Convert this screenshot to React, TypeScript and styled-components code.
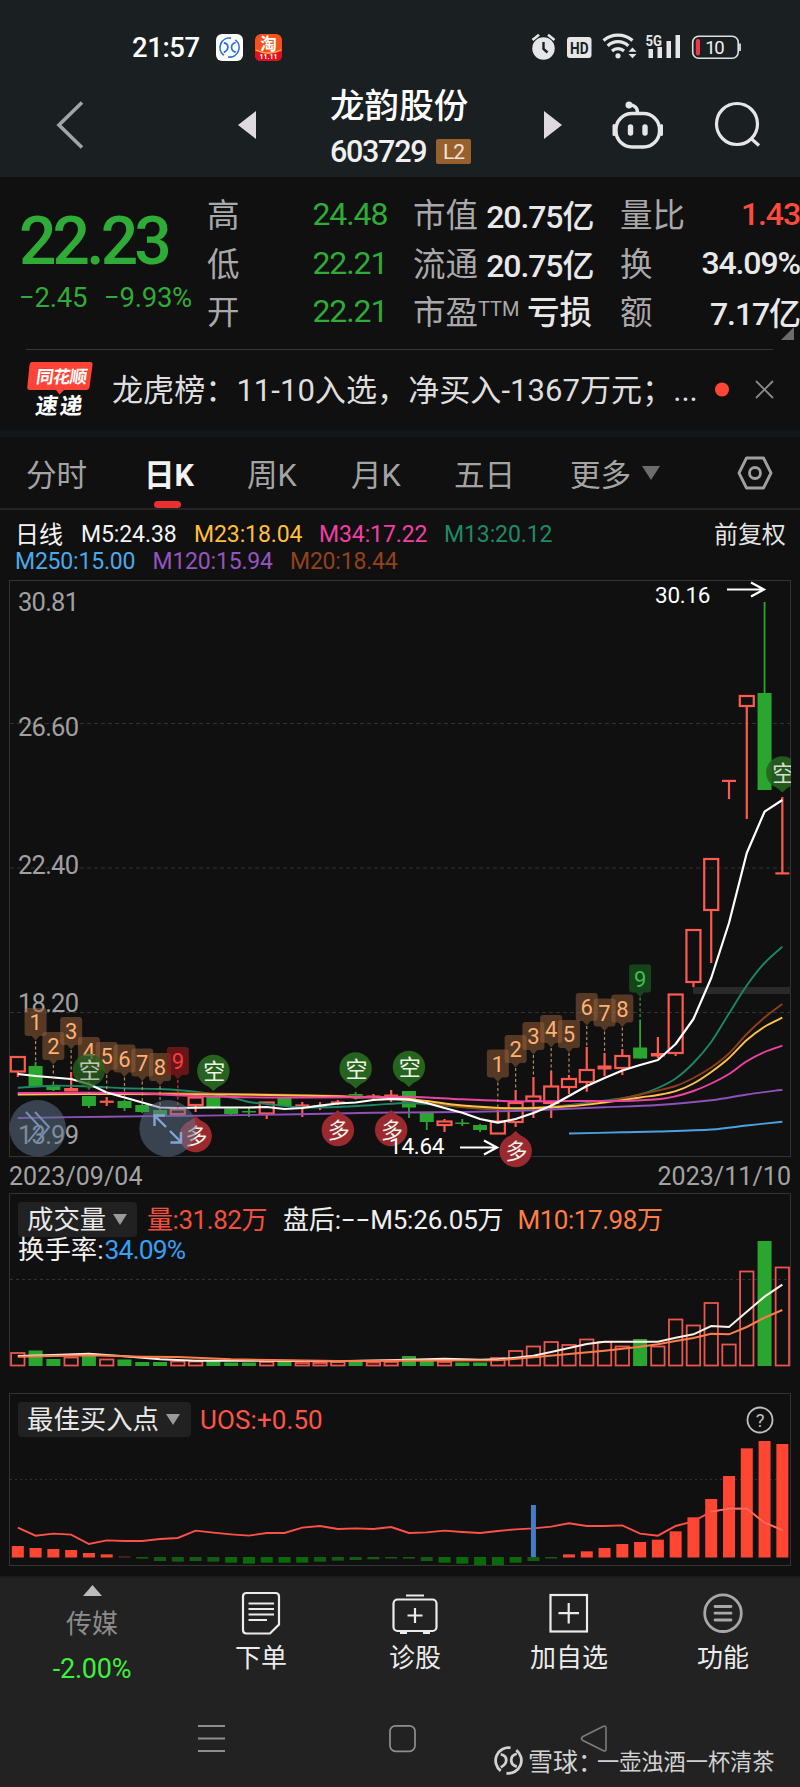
import React from 'react';
import styled, { createGlobalStyle } from 'styled-components';

const GlobalStyle = createGlobalStyle`
  body { margin: 0; background: #101010; }
  * { box-sizing: border-box; }
  svg { display: block; overflow: visible; flex-shrink: 0; }
`;

const fontStack = `Roboto, 'Noto Sans CJK SC', sans-serif`;

const C = {
  green: '#2fab38',
  candleRed: '#ff5a50',
  candleGreen: '#2aa52f',
  grid: '#333333',
  label: '#a0a0a2',
};

const Screen = styled.div`
  width: 800px;
  height: 1787px;
  overflow: hidden;
  position: relative;
  background: #101010;
  color: #e6e6e6;
  font-family: ${fontStack};
  display: flex;
  flex-direction: column;
  white-space: nowrap;
`;

const StatusBar = styled.header`
  height: 94px;
  background: #1a2022;
  display: flex;
  align-items: center;
  padding: 0 60px 0 132px;
`;
const Clock = styled.span`
  font-size: 27.5px;
  font-weight: 500;
  color: #fff;
  width: 84px;
  letter-spacing: -0.4px;
`;
const AppIcons = styled.div`
  display: flex;
  gap: 12px;
  flex: 1;
`;

const TitleBar = styled.div`
  height: 83px;
  background: #1a2022;
  display: grid;
  grid-template-columns: 238px 92px 141px 91px 104px 134px;
  grid-template-rows: 61px;
  align-items: center;
`;
const BackSlot = styled.div`
  padding-left: 56px;
`;
const StockTitle = styled.div`
  display: flex;
  flex-direction: column;
  padding-top: 5px;
`;
const StockName = styled.div`
  font-size: 34.6px;
  line-height: 46px;
  font-weight: 500;
  color: #fff;
`;
const StockCode = styled.div`
  display: flex;
  align-items: center;
  justify-content: space-between;
  height: 40px;
  margin-top: 2px;
  font-size: 30.5px;
  font-weight: 500;
  letter-spacing: -1.3px;
  color: #f0f0f0;
`;
const LevelBadge = styled.span`
  width: 35px;
  height: 25px;
  border-radius: 2px;
  background: #96612f;
  color: #f3e3d3;
  font-size: 21px;
  font-weight: 400;
  letter-spacing: -1px;
  line-height: 26px;
  text-align: center;
`;

const Quote = styled.section`
  height: 172px;
  position: relative;
  display: grid;
  grid-template-columns: 207px 179px 27px 179px 28px 180px;
`;
const LastPrice = styled.div`
  padding: 27px 0 0 19px;
  color: ${C.green};
`;
const BigPrice = styled.div`
  font-size: 66px;
  line-height: 76px;
  font-weight: 500;
  letter-spacing: -3.9px;
`;
const ChangeRow = styled.div`
  display: grid;
  grid-template-columns: 85px 100px;
  font-size: 27.5px;
  line-height: 32px;
  margin-top: 2px;
  letter-spacing: -0.25px;
`;
const StatColumn = styled.div<{ $col: number }>`
  grid-column: ${(p) => p.$col};
  padding-top: 13px;
`;
const Stat = styled.div`
  height: 48.5px;
  display: flex;
  align-items: center;
  justify-content: space-between;
  font-size: 32.5px;
`;
const StatName = styled.span`
  color: #a9a9ab;
  padding-bottom: 3px;
  sup { font-size: 20px; line-height: 0; vertical-align: 8px; }
`;
const StatValue = styled.span<{ $color?: string; $edge?: boolean }>`
  color: ${(p) => p.$color || '#e8e8e8'};
  font-size: 32px;
  font-weight: ${(p) => (p.$color === C.green ? 400 : 500)};
  letter-spacing: -1.1px;
  margin-right: ${(p) => (p.$edge ? 0 : -1.3)}px;
`;
const StatWord = styled.span`
  color: #e8e8e8;
  font-weight: 500;
  padding-bottom: 4px;
`;
const CornerMark = styled.svg`
  position: absolute;
  right: 6px;
  top: 150px;
`;

const News = styled.section`
  height: 81px;
  margin: 0 27px 0 26px;
  border-top: 1px solid #363636;
  display: flex;
  align-items: center;
`;
const NewsLogo = styled.div`
  width: 86px;
  flex-shrink: 0;
`;
const NewsText = styled.div`
  width: 603px;
  flex-shrink: 0;
  font-size: 31.1px;
  line-height: 40px;
  padding-top: 1px;
  color: #dedede;
`;
const Band = styled.div`
  height: 7px;
  background: #111718;
`;

const Tabs = styled.nav`
  height: 73px;
  border-bottom: 2px solid #242424;
  display: grid;
  grid-template-columns: 118px 103px 104px 103px 116px 167px 40px;
  padding-left: 26px;
`;
const Tab = styled.div<{ $active?: boolean }>`
  position: relative;
  display: flex;
  align-items: center;
  gap: 11px;
  font-size: 30.6px;
  color: ${(p) => (p.$active ? '#f2f2f2' : '#a4a4a4')};
  font-weight: ${(p) => (p.$active ? 700 : 400)};
  letter-spacing: -0.2px;
`;
const Underline = styled.i`
  position: absolute;
  left: 10px;
  bottom: 0;
  width: 27px;
  height: 7px;
  border-radius: 3.5px;
  background: #e93030;
`;

const Legend = styled.div`
  height: 70px;
  padding-top: 5px;
`;
const LegendRow = styled.div<{ $cols: string; $ls?: number }>`
  display: grid;
  grid-template-columns: ${(p) => p.$cols};
  padding-left: 15px;
  height: 31px;
  align-items: center;
  letter-spacing: ${(p) => p.$ls ?? 0}px;
`;
const LegendItem = styled.span<{ $color: string }>`
  color: ${(p) => p.$color};
  font-size: 23px;
`;
const LegendWord = styled(LegendItem)`
  font-size: 24px;
  padding-bottom: 4px;
`;

const Dates = styled.div`
  height: 33px;
  display: flex;
  justify-content: space-between;
  align-items: center;
  padding: 0 9px;
  font-size: 25px;
  letter-spacing: 0.05px;
  color: #a3a3a5;
`;

const Panel = styled.section`
  height: 173px;
  margin-bottom: 27px;
  display: grid;
  & > * { grid-area: 1 / 1; }
`;
const PanelHead = styled.div`
  z-index: 1;
  padding: 9px 26px 0 18px;
`;
const PanelRow = styled.div`
  display: flex;
  align-items: center;
  height: 35px;
  font-size: 26px;
  line-height: 32px;
`;
const IndicatorSelect = styled.div<{ $w: number }>`
  width: ${(p) => p.$w}px;
  height: 35px;
  background: #212121;
  border-radius: 4px;
  display: flex;
  align-items: center;
  gap: 7px;
  padding-left: 9px;
  font-size: 26.4px;
  color: #e8e8e8;
`;
const Reading = styled.span<{ $color: string; $ml: number; $ls?: number }>`
  color: ${(p) => p.$color};
  margin-left: ${(p) => p.$ml}px;
  letter-spacing: ${(p) => p.$ls ?? 0}px;
`;
const TurnoverRow = styled.div`
  height: 30px;
  line-height: 26px;
  font-size: 26.4px;
  color: #f0f0f0;
`;
const Push = styled.div`
  margin-left: auto;
`;

const Dock = styled.footer`
  flex: 1;
  margin-top: -17px;
  background: #222;
  border-top: 2px solid #1c1c1c;
`;
const DockItems = styled.div`
  display: grid;
  grid-template-columns: 184px 154px 154px 154px 154px;
  height: 125px;
`;
const DockItem = styled.div`
  display: flex;
  flex-direction: column;
  align-items: center;
  padding-top: 12px;
  font-size: 26px;
  line-height: 34px;
  color: #ececec;
  svg { margin-bottom: 5px; }
`;
const Sector = styled.div`
  display: flex;
  flex-direction: column;
  align-items: center;
  padding-top: 7px;
  font-size: 26px;
  line-height: 38px;
  color: #8c8c8c;
  svg { margin-bottom: 9px; }
`;
const SectorChange = styled.div`
  margin-top: 10px;
  font-size: 27px;
  line-height: 32px;
  letter-spacing: -0.2px;
  color: #3df23d;
`;
const SystemNav = styled.div`
  display: grid;
  grid-template-columns: 191px 190px 29px;
  padding: 20px 0 0 197px;
`;
const Watermark = styled.div`
  position: absolute;
  left: 494px;
  top: 1743px;
  height: 34px;
  display: flex;
  align-items: center;
  font-size: 22.2px;
  color: #d2d2d2;
`;
const WatermarkBrand = styled.span`
  font-size: 25px;
  width: 69px;
  margin-left: 5px;
`;

const STEP = 17.78;
const X0 = 17.8;
const cx = (i: number) => X0 + i * STEP;

type Candle = [number, 'r' | 'g', number, number, number, number];
// index, direction, high, body top, body bottom, low (chart y)
const candles: Candle[] = [
  [0, 'r', 1056, 1057, 1071.5, 1077], [1, 'g', 1062, 1066, 1087, 1087], [2, 'g', 1084, 1086, 1090, 1091],
  [3, 'r', 1072, 1088.5, 1091, 1091], [4, 'g', 1096, 1096, 1106, 1108], [5, 'r', 1097, 1101.5, 1102, 1106],
  [6, 'g', 1100, 1101, 1108, 1111], [7, 'g', 1105, 1105, 1112, 1113], [8, 'g', 1110, 1110, 1115.5, 1117],
  [9, 'r', 1109, 1109.5, 1114, 1114], [10, 'r', 1095, 1097.5, 1105, 1112], [11, 'g', 1097, 1097, 1107, 1109],
  [12, 'g', 1108, 1108.5, 1114, 1116], [13, 'g', 1108, 1111, 1112, 1117], [14, 'r', 1102, 1102.5, 1113.5, 1119],
  [15, 'g', 1098, 1098, 1106, 1107], [16, 'r', 1102, 1105, 1106, 1117], [17, 'r', 1102, 1106, 1107, 1110],
  [18, 'r', 1100, 1102, 1103, 1105], [19, 'g', 1092, 1094, 1098, 1099.5], [20, 'r', 1094, 1096, 1097, 1099],
  [21, 'r', 1090, 1095, 1098, 1102], [22, 'g', 1091, 1091, 1107.5, 1118], [23, 'g', 1113, 1113, 1122, 1130],
  [24, 'r', 1119, 1121.5, 1125, 1132], [25, 'g', 1119, 1122.5, 1123.5, 1126], [26, 'g', 1124, 1125, 1130, 1132],
  [27, 'r', 1108, 1121.5, 1133.5, 1134], [28, 'r', 1090, 1103, 1122, 1127], [29, 'r', 1077, 1096.5, 1101, 1118],
  [30, 'r', 1071, 1086.5, 1103, 1118], [31, 'r', 1075, 1079, 1087, 1094], [32, 'r', 1047, 1070, 1082, 1091.7],
  [33, 'r', 1053, 1066, 1069, 1076], [34, 'r', 1049, 1056, 1068, 1075], [35, 'g', 1020, 1047.5, 1058.5, 1058.5],
  [36, 'r', 1037, 1053.5, 1056, 1058], [37, 'r', 994, 994.5, 1053, 1056], [38, 'r', 929, 930, 982, 987],
  [39, 'r', 858, 859, 910, 963], [40, 'r', 780, 780.5, 781.3, 799], [41, 'r', 695, 696, 706, 819],
  [42, 'g', 602, 693, 790, 790], [43, 'r', 797, 873, 873.8, 874],
];

type Pt = [number, number];
const pts = (list: Pt[]) => list.map(([i, y]) => [cx(i), y] as Pt);
const poly = (list: Pt[]) => pts(list).map((p) => p.join(',')).join(' ');
const smooth = (list: Pt[]) => {
  const p = pts(list);
  let d = `M${p[0][0]},${p[0][1]}`;
  for (let i = 0; i < p.length - 1; i++) {
    const a = p[Math.max(i - 1, 0)], b = p[i], c = p[i + 1], e = p[Math.min(i + 2, p.length - 1)];
    d += `C${b[0] + (c[0] - a[0]) / 6},${b[1] + (c[1] - a[1]) / 6} ${c[0] - (e[0] - b[0]) / 6},${c[1] - (e[1] - b[1]) / 6} ${c[0]},${c[1]}`;
  }
  return d;
};

const m5: Pt[] = [1074, 1076, 1077.5, 1079, 1084, 1092.5, 1097.5, 1102.5, 1107.5, 1108, 1107.7, 1107.5, 1107.5, 1107.5, 1107, 1109, 1108, 1105.7, 1103.5, 1102.5, 1100, 1099, 1099.7, 1103, 1108, 1112.7, 1119, 1122.7, 1119, 1113, 1105.7, 1096, 1086, 1078, 1070.5, 1065, 1060, 1044, 1019, 978, 923, 853, 811.7, 800].map((y, i) => [i, y]);
const averages: { color: string; line: Pt[] }[] = [
  { color: '#1e8566', line: [[0, 1087.7], [2, 1085.7], [4, 1086.5], [6, 1088.3], [8, 1089], [10, 1091.7], [12, 1097.5], [13, 1102], [14, 1104], [16, 1107.3], [18, 1107], [20, 1105], [22, 1103], [24, 1105.5], [26, 1108.5], [28, 1109.5], [30, 1107], [32, 1103], [34, 1098.3], [35, 1094.5], [36, 1088], [37, 1078.5], [38, 1063], [39, 1042], [40, 1013.5], [41, 985.5], [42, 963], [43, 946.7]] },
  { color: '#8f3f17', line: [[0, 1093.5], [8, 1093], [14, 1094.5], [19, 1096.5], [21, 1099], [23, 1103], [25, 1107], [27, 1109], [29, 1107.5], [31, 1105.7], [33, 1101.7], [35, 1094.5], [36, 1090.5], [37, 1086], [38, 1078], [39, 1067.5], [40, 1053.5], [41, 1034], [42, 1017.5], [43, 1004]] },
  { color: '#ffc24a', line: [[0, 1094.5], [6, 1094], [12, 1094.5], [18, 1096.2], [19, 1097.5], [21, 1097.5], [23, 1101], [25, 1105.5], [28, 1108.3], [31, 1106.3], [33, 1102.5], [35, 1097.5], [36, 1095], [37, 1091.2], [38, 1083.5], [39, 1072], [40, 1058], [41, 1040], [42, 1026.7], [43, 1017.7]] },
  { color: '#ef43a4', line: [[0, 1093], [6, 1093], [10, 1096], [14, 1097.5], [19, 1097.3], [22, 1096.7], [25, 1099.3], [28, 1101.3], [31, 1101], [34, 1101], [36, 1099.3], [37, 1096.3], [38, 1091], [39, 1083.5], [40, 1074], [41, 1061.3], [42, 1052], [43, 1045.7]] },
  { color: '#8e51b8', line: [[0, 1118], [5, 1116.7], [10, 1115.7], [15, 1114.5], [20, 1112.8], [25, 1112], [28, 1111], [30, 1109.5], [33, 1107.3], [36, 1105], [39, 1100.3], [41, 1094.5], [43, 1089.7]] },
  { color: '#4aa3e0', line: [[31, 1133.5], [34, 1132.3], [36, 1131.5], [39, 1129.5], [41, 1125.5], [43, 1121.7]] },
];

const countTags: [number, string, number, string?][] = [
  [1, '1', 1023], [2, '2', 1047], [3, '3', 1032], [4, '4', 1052], [5, '5', 1057], [6, '6', 1059.5], [7, '7', 1063.5], [8, '8', 1068], [9, '9', 1062, 'red'],
  [27, '1', 1064.5], [28, '2', 1050], [29, '3', 1037], [30, '4', 1030], [31, '5', 1035], [32, '6', 1008], [33, '7', 1013.5], [34, '8', 1009.5], [35, '9', 979.5, 'green'],
];
const tagColors: Record<string, [string, string]> = {
  brown: ['rgba(150,96,55,0.52)', '#ffb074'],
  red: ['rgba(140,25,25,0.7)', '#ff3b3b'],
  green: ['rgba(22,78,28,0.85)', '#3fc04a'],
};

const CountTag = ({ x, y, text, kind = 'brown', to }: { x: number; y: number; text: string; kind?: string; to: number }) => (
  <g>
    <line x1={x} x2={x} y1={y + 18} y2={to} stroke={kind === 'brown' ? '#d9a06a' : tagColors[kind][1]} strokeOpacity="0.85" strokeWidth="1.2" strokeDasharray="3 2.5" />
    <path d={`M${x - 8},${y - 15}h16q3,0 3,3v22q0,3 -3,3h-4l-4,4.5l-4,-4.5h-4q-3,0 -3,-3v-22q0,-3 3,-3z`} fill={tagColors[kind][0]} />
    <text x={x} y={y + 7} fontSize="22" textAnchor="middle" fill={tagColors[kind][1]}>{text}</text>
  </g>
);

const Pin = ({ i, y, side, opacity = 1 }: { i: number; y: number; side: 'short' | 'long'; opacity?: number }) => {
  const s = side === 'short' ? 1 : -1;
  const x = cx(i);
  return (
    <g opacity={opacity}>
      <path d={`M${x - 9},${y + 12 * s}L${x},${y + 20 * s}L${x + 9},${y + 12 * s}z`} fill={s === 1 ? '#26631e' : '#9b2a30'} />
      <circle cx={x} cy={y} r="16.2" fill={s === 1 ? '#26631e' : '#9b2a30'} />
      <text x={x + 0.8} y={y + 8} fontSize="22" textAnchor="middle" fill="#eef4e8">{s === 1 ? '空' : '多'}</text>
    </g>
  );
};

const PriceChart = () => (
  <svg width="800" height="580" viewBox="0 580 800 580" fontFamily={fontStack}>
    <defs>
      <clipPath id="plot"><rect x="9" y="580" width="782" height="600" /></clipPath>
    </defs>
    <rect x="9.5" y="580.5" width="781" height="576" fill="none" stroke={C.grid} />
    {[723.5, 868, 1012.5].map((y) => (
      <line key={y} x1="10" x2="790" y1={y} y2={y} stroke={C.grid} strokeDasharray="4 3" />
    ))}
    <rect x="693" y="987" width="98" height="7" fill="#2a2a2a" />
    <g fill={C.label} fontSize="25.5">
      {([['30.81', 611], ['26.60', 736], ['22.40', 874], ['18.20', 1012], ['13.99', 1144]] as [string, number][]).map(([t, y]) => (
        <text key={t} x="18" y={y} textLength="61">{t}</text>
      ))}
    </g>
    {candles.map(([i, dir, hi, top, bot, lo]) => {
      const x = cx(i);
      const thin = bot - top < 3.5;
      return dir === 'g' ? (
        <g key={i} fill={C.candleGreen}>
          <rect x={x - 0.9} y={hi} width="1.8" height={lo - hi} />
          <rect x={x - 7} y={top} width="14" height={Math.max(bot - top, 1.5)} />
        </g>
      ) : (
        <g key={i} stroke={C.candleRed} strokeWidth="2.2" fill="none">
          {top > hi + 1 && <line x1={x} x2={x} y1={hi} y2={top} />}
          {lo > bot + 1 && <line x1={x} x2={x} y1={bot} y2={lo} />}
          {thin ? <line x1={x - 7} x2={x + 7} y1={(top + bot) / 2} y2={(top + bot) / 2} strokeWidth={Math.max(bot - top + 1, 2.2)} />
            : <rect x={x - 7} y={top} width="14" height={bot - top} />}
        </g>
      );
    })}
    {averages.map(({ color, line }) => (
      <path key={color} d={smooth(line)} stroke={color} strokeWidth="1.9" fill="none" />
    ))}
    <polyline points={poly(m5)} stroke="#fff" strokeWidth="2.2" fill="none" strokeLinejoin="round" />
    {countTags.map(([i, t, y, kind]) => (
      <CountTag key={i} x={cx(i)} y={y} text={t} kind={kind} to={Math.max(candles[i][2], y + 18)} />
    ))}
    <g clipPath="url(#plot)">
      <Pin i={4} y={1070} side="short" opacity={0.75} />
      <Pin i={11} y={1071} side="short" />
      <Pin i={19} y={1068.5} side="short" />
      <Pin i={22} y={1067} side="short" />
      <Pin i={43} y={772.5} side="short" opacity={0.9} />
      <Pin i={10} y={1136} side="long" />
      <Pin i={18} y={1130} side="long" />
      <Pin i={21} y={1130} side="long" />
      <Pin i={28} y={1151} side="long" />
    </g>
    <circle cx="37.7" cy="1128.3" r="28.3" fill="rgba(96,118,142,0.5)" />
    <path d="M26,1112L40,1127L28,1142M35,1112L49,1127L37,1142" stroke="#7490b4" strokeWidth="2" fill="none" />
    <circle cx="167.7" cy="1128.3" r="28.3" fill="rgba(96,118,142,0.5)" />
    <path d="M166,1127L155,1116M154.500,1126V1115.500H165M170,1131L181,1142M170.500,1142.500H181V1132" stroke="#83a5d6" strokeWidth="2.4" fill="none" />
    <g stroke="#fff" strokeWidth="2.2" fill="none">
      <path d="M727,589.5H764M751,582.5L764,589.5L751,596.5" />
      <path d="M460,1147.500H497M484,1140.500L497,1147.500L484,1154.500" />
    </g>
    <g fill="#fff" fontSize="22.5">
      <text x="655" y="602.500" textLength="55.500">30.16</text>
      <text x="389" y="1154" textLength="55.500">14.64</text>
    </g>
  </svg>
);

// [top edge, direction] per trading day, bars stand on y = 1366
const volumes: [number, 'r' | 'g'][] = [
  [1353, 'r'], [1350.5, 'g'], [1359, 'g'], [1357.5, 'r'], [1354.5, 'g'], [1359.5, 'r'], [1359.5, 'g'], [1362, 'g'], [1362, 'g'], [1361.5, 'r'], [1361.5, 'r'],
  [1360, 'g'], [1362.5, 'g'], [1362.5, 'g'], [1362, 'r'], [1361, 'g'], [1363, 'r'], [1363, 'r'], [1362, 'r'], [1361, 'g'], [1362.5, 'r'], [1362, 'r'],
  [1356, 'g'], [1360.5, 'g'], [1362, 'r'], [1362.5, 'g'], [1362.5, 'g'], [1358, 'r'], [1351, 'r'], [1346.5, 'r'], [1342, 'r'], [1345, 'r'], [1339.5, 'r'],
  [1342, 'r'], [1346.5, 'r'], [1339, 'g'], [1346.5, 'r'], [1319.5, 'r'], [1325.5, 'r'], [1303, 'r'], [1344.5, 'r'], [1271.5, 'r'], [1241, 'g'], [1267.5, 'r'],
];
const vy = (v: number) => 1190 + v / 3;
const volM5: Pt[] = ([[0, 498], [2, 495], [4, 491], [6, 499], [8, 508], [10, 512], [14, 512], [18, 514], [22, 509], [24, 506], [26, 509], [27, 508], [28, 503], [29, 497], [30, 486], [31, 474], [32, 462], [33, 455], [36, 455], [37, 443], [38, 433], [39, 408], [40, 411], [41, 365], [42, 320], [43, 284]] as Pt[]).map(([i, v]) => [i, vy(v)]);
const volM10: Pt[] = ([[0, 500], [4, 496], [7, 500], [9, 501], [12, 508], [18, 513], [27, 511], [29, 502], [31, 492], [33, 482], [35, 470], [36, 463], [37, 453], [38, 444], [39, 431], [40, 433], [41, 411], [42, 383], [43, 360]] as Pt[]).map(([i, v]) => [i, vy(v)]);

const VolumeChart = () => (
  <svg width="800" height="173" viewBox="0 1193 800 173">
    <path d="M9.5,1366V1193.500H790.500V1366" stroke={C.grid} fill="none" />
    <line x1="10" x2="790" y1="1279.5" y2="1279.5" stroke={C.grid} strokeDasharray="3 3" />
    {volumes.map(([top, dir], i) =>
      dir === 'g' ? <rect key={i} x={cx(i) - 7} y={top} width="14" height={1366 - top} fill={C.candleGreen} />
        : <rect key={i} x={cx(i) - 6.7} y={top} width="13.4" height={1365.5 - top} fill="none" stroke="#e8564e" strokeWidth="1.8" />)}
    <polyline points={poly(volM5)} stroke="#fff0e6" strokeWidth="2" fill="none" />
    <polyline points={poly(volM10)} stroke="#ff7d4a" strokeWidth="2" fill="none" />
  </svg>
);

const uosBars = [498, 504, 507, 510, 519, 523, 529, 536, 543, 545, 543, 545, 548, 551, 548, 548, 548, 545, 542, 540, 538, 534, 536, 543, 548, 551, 555, 555, 548, 543, 534, 523, 514, 504, 492, 486, 479, 454, 412, 357, 288, 205, 183, 192];
const uosLine = [443, 467, 461, 464, 492, 481, 483, 483, 477, 474, 452, 458, 463, 467, 459, 459, 443, 438, 447, 445, 447, 441, 459, 457, 452, 456, 459, 453, 448, 445, 440, 430, 438, 438, 436, 461, 467, 438, 424, 395, 386, 386, 428, 450];
const uy = (v: number) => 1380 + v / 3;

const UosChart = () => (
  <svg width="800" height="173" viewBox="0 1393 800 173">
    <rect x="9.5" y="1393.500" width="781" height="172" fill="none" stroke={C.grid} />
    <line x1="10" x2="790" y1="1479.500" y2="1479.500" stroke={C.grid} strokeDasharray="2 3" />
    <polyline points={poly(uosLine.map((v, i) => [i, uy(v)] as Pt))} stroke="#ff5148" strokeWidth="1.9" fill="none" />
    {uosBars.map((v, i) => {
      const y = uy(v);
      return v < 531
        ? <rect key={i} x={cx(i) - 6} y={y} width="12" height={1557.5 - y} fill={i === 6 ? '#6b2b2b' : '#ff4633'} />
        : <rect key={i} x={cx(i) - 6} y={1557} width="12" height={Math.max(y - 1557, 1.5)} fill={v > 546 ? '#0a6a0a' : '#125c14'} />;
    })}
    <rect x={cx(29) - 2.5} y="1505" width="5" height="52" fill="#467cc4" />
    <polyline points={poly([39, 40, 41, 42, 43].map((i) => [i, uy(uosLine[i])] as Pt))} stroke="#ff6d60" strokeWidth="1.6" fill="none" />
  </svg>
);

const Down = ({ w = 14, h = 11, color = '#9a9a9a' }: { w?: number; h?: number; color?: string }) => (
  <svg width={w} height={h} viewBox="0 0 14 11" preserveAspectRatio="none"><path d="M0,0H14L7,11z" fill={color} /></svg>
);

const BrandRing = ({ size, color, sw = 2 }: { size: number; color: string; sw?: number }) => (
  <svg width={size} height={size} viewBox="0 0 28 28" fill="none" stroke={color} strokeWidth={sw}>
    <path d="M16,1.700A12.500,12.500 0 0 0 6.500,24M12,26.300A12.500,12.500 0 0 0 21.500,4" />
    <path d="M6.500,8C10,8.500 12,11 11.800,14C11.600,17 9,19.300 6.500,20.500M22,7.500C18.500,8.500 16.600,10.800 16.600,13.500C16.600,16.500 18.500,19 22,20" />
  </svg>
);

const StatusIcons = () => (
  <svg width="210" height="30" viewBox="530 32 210 30" fontFamily={fontStack}>
    <circle cx="543.500" cy="48.500" r="11.200" fill="#e6e6e6" />
    <path d="M543.500,42V49L547.500,52.500" stroke="#1a2022" strokeWidth="2.400" fill="none" />
    <path d="M532.500,40L539,34.800M554.500,40L548,34.800" stroke="#e6e6e6" strokeWidth="2.600" />
    <rect x="567" y="37" width="24.500" height="21" rx="3" fill="#e6e6e6" />
    <text x="579.300" y="53.800" fontSize="17" fontWeight="700" textAnchor="middle" fill="#1a2022" textLength="18.500" lengthAdjust="spacingAndGlyphs">HD</text>
    <g stroke="#e6e6e6" fill="none" strokeWidth="3.200">
      <path d="M603.500,40.500A22,22 0 0 1 632.500,40.500" />
      <path d="M607.700,45.800A15,15 0 0 1 628.300,45.800" />
      <path d="M612,51A9,9 0 0 1 624,51" />
    </g>
    <circle cx="618" cy="55.800" r="2.600" fill="#e6e6e6" />
    <path d="M628.500,51.800L632.500,47.500L636.500,51.800zM628.500,54L632.500,58.300L636.500,54z" fill="#e6e6e6" />
    <text x="645.500" y="45.500" fontSize="14" fontWeight="700" fill="#e6e6e6" textLength="16.500" lengthAdjust="spacingAndGlyphs">5G</text>
    <path d="M648.500,49h4.500v9h-4.500zM657.500,47h4.500v11h-4.500zM666.500,41h4.500v17h-4.500zM675.500,35h4.500v23h-4.500z" fill="#e6e6e6" />
    <rect x="692.700" y="36.200" width="45.500" height="22" rx="6" fill="none" stroke="#e0e0e0" strokeWidth="1.600" />
    <rect x="695.800" y="39" width="4.200" height="16.500" rx="2" fill="#f0364a" />
    <path d="M740,43.500v7.500" stroke="#e0e0e0" strokeWidth="1.800" />
    <text x="715" y="53.700" fontSize="18.500" textAnchor="middle" fill="#f0f0f0" textLength="19.500">10</text>
  </svg>
);

export default function App() {
  return (
    <Screen>
      <GlobalStyle />
      <StatusBar>
        <Clock>21:57</Clock>
        <AppIcons>
          <svg width="27" height="27" viewBox="0 0 27 27">
            <rect width="27" height="27" rx="6" fill="#fff" />
            <g transform="translate(2.800 2.800)"><BrandRing size={21.5} color="#2b6fe0" sw={2.2} /></g>
          </svg>
          <svg width="27" height="27" viewBox="0 0 27 27" fontFamily={fontStack}>
            <rect width="27" height="27" rx="6" fill="#f4511e" />
            <path d="M0,17Q13,23 27,17V21Q27,27 21,27H6Q0,27 0,21z" fill="#e01022" />
            <path d="M1,16Q13,22 26,16" stroke="#ffb648" strokeWidth="1.300" fill="none" />
            <text x="13.500" y="15.500" fontSize="16.500" fontWeight="700" textAnchor="middle" fill="#fff">淘</text>
            <text x="13.500" y="25.300" fontSize="7" fontWeight="700" textAnchor="middle" fill="#fff">11.11</text>
          </svg>
        </AppIcons>
        <StatusIcons />
      </StatusBar>

      <TitleBar>
        <BackSlot>
          <svg width="28" height="48" viewBox="0 0 28 48"><path d="M26,1.500L3,24L26,46.500" stroke="#a3a5a5" strokeWidth="3.600" fill="none" /></svg>
        </BackSlot>
        <svg width="18" height="28" viewBox="0 0 18 28"><path d="M18,0V28L0,14z" fill="#dedade" /></svg>
        <StockTitle>
          <StockName>龙韵股份</StockName>
          <StockCode>603729<LevelBadge>L2</LevelBadge></StockCode>
        </StockTitle>
        <svg width="91" height="28" viewBox="0 0 91 28"><path d="M73,0V28L91,14z" fill="#dedade" /></svg>
        <svg width="104" height="50" viewBox="562 98.500 104 50" fill="none" stroke="#e6e6e6" strokeWidth="3.400">
          <rect x="616" y="112" width="43.500" height="33.500" rx="16" />
          <path d="M637.500,111C637.500,106 634,103.500 629.500,103.500" strokeLinecap="round" />
          <circle cx="629" cy="103.500" r="1.800" fill="#e6e6e6" />
          <path d="M614,124V133M661.500,124V133" strokeWidth="3" strokeLinecap="round" />
          <path d="M630.500,125.500V131.500M645,125.500V131.500" strokeWidth="5.400" strokeLinecap="round" />
        </svg>
        <svg width="100" height="50" viewBox="666 99 100 50" fill="none" stroke="#e6e6e6" strokeWidth="3.200">
          <circle cx="737" cy="123" r="20.500" /><path d="M750.500,137L759,144.500" />
        </svg>
      </TitleBar>

      <Quote>
        <LastPrice>
          <BigPrice>22.23</BigPrice>
          <ChangeRow><span>−2.45</span><span>−9.93%</span></ChangeRow>
        </LastPrice>
        <StatColumn $col={2}>
          <Stat><StatName>高</StatName><StatValue $color={C.green}>24.48</StatValue></Stat>
          <Stat><StatName>低</StatName><StatValue $color={C.green}>22.21</StatValue></Stat>
          <Stat><StatName>开</StatName><StatValue $color={C.green}>22.21</StatValue></Stat>
        </StatColumn>
        <StatColumn $col={4}>
          <Stat><StatName>市值</StatName><StatValue>20.75亿</StatValue></Stat>
          <Stat><StatName>流通</StatName><StatValue>20.75亿</StatValue></Stat>
          <Stat><StatName>市盈<sup>TTM</sup></StatName><StatWord>亏损</StatWord></Stat>
        </StatColumn>
        <StatColumn $col={6}>
          <Stat><StatName>量比</StatName><StatValue $edge $color="#ff4a3d">1.43</StatValue></Stat>
          <Stat><StatName>换</StatName><StatValue $edge>34.09%</StatValue></Stat>
          <Stat><StatName>额</StatName><StatValue $edge>7.17亿</StatValue></Stat>
        </StatColumn>
        <CornerMark width="13" height="13" viewBox="0 0 13 13"><path d="M13,0V13H0z" fill="#6c6c6c" /></CornerMark>
      </Quote>

      <News>
        <NewsLogo>
          <svg width="68" height="56" viewBox="26 362 68 56" fontFamily={fontStack} fontWeight="700">
            <path d="M32,362H90Q93,362 92.500,365L89.500,387Q89,390 86,390H64L59.500,394.500L56,390H30Q27,390 27.300,387L29.500,365Q30,362 32,362z" fill="#ff4437" />
            <g fill="#fff" transform="translate(60 390) skewX(-8) translate(-60 -390)">
              <text x="34.500" y="383" fontSize="17.500" textLength="51">同花顺</text>
              <text x="38" y="414" fontSize="22.500" textLength="47">速递</text>
            </g>
          </svg>
        </NewsLogo>
        <NewsText>龙虎榜：11-10入选，净买入-1367万元；...</NewsText>
        <svg width="60" height="20" viewBox="715 380 60 20">
          <circle cx="722" cy="389.500" r="7" fill="#ff4733" />
          <path d="M756,381L773,398M773,381L756,398" stroke="#8a8a8a" strokeWidth="1.800" />
        </svg>
      </News>
      <Band />

      <Tabs>
        <Tab>分时</Tab>
        <Tab $active>日K<Underline /></Tab>
        <Tab>周K</Tab>
        <Tab>月K</Tab>
        <Tab>五日</Tab>
        <Tab>更多<Down w={18} h={14} color="#6c6c6c" /></Tab>
        <Tab>
          <svg width="36" height="36" viewBox="0 0 36 36" fill="none" stroke="#a0a0a0" strokeWidth="2.800">
            <path d="M9.500,3H26.500L34,18L26.500,33H9.500L2,18z" strokeLinejoin="round" />
            <circle cx="18" cy="18" r="5.500" />
          </svg>
        </Tab>
      </Tabs>

      <Legend>
        <LegendRow $cols="66px 113px 125px 125px 270px 80px" $ls={-0.1}>
          <LegendWord $color="#f4f4f4">日线</LegendWord>
          <LegendItem $color="#f4f4f4">M5:24.38</LegendItem>
          <LegendItem $color="#ffbe3c">M23:18.04</LegendItem>
          <LegendItem $color="#f23fa5">M34:17.22</LegendItem>
          <LegendItem $color="#1f8a66">M13:20.12</LegendItem>
          <LegendWord $color="#e4e4e4">前复权</LegendWord>
        </LegendRow>
        <LegendRow $cols="137.5px 137.5px 200px" $ls={-0.2}>
          <LegendItem $color="#4aa9ea">M250:15.00</LegendItem>
          <LegendItem $color="#9554c0">M120:15.94</LegendItem>
          <LegendItem $color="#92421c">M20:18.44</LegendItem>
        </LegendRow>
      </Legend>

      <PriceChart />
      <Dates><span>2023/09/04</span><span>2023/11/10</span></Dates>

      <Panel>
        <VolumeChart />
        <PanelHead>
          <PanelRow>
            <IndicatorSelect $w={119}>成交量<Down /></IndicatorSelect>
            <Reading $color="#f2503f" $ml={10} $ls={-0.45}>量:31.82万</Reading>
            <Reading $color="#f0f0f0" $ml={16} $ls={-0.18}>盘后:−−M5:26.05万</Reading>
            <Reading $color="#ff7d45" $ml={14} $ls={-0.45}>M10:17.98万</Reading>
          </PanelRow>
          <TurnoverRow>换手率:<Reading $color="#35a0f5" $ml={1} $ls={-0.8}>34.09%</Reading></TurnoverRow>
        </PanelHead>
      </Panel>

      <Panel>
        <UosChart />
        <PanelHead>
          <PanelRow>
            <IndicatorSelect $w={173}>最佳买入点<Down /></IndicatorSelect>
            <Reading $color="#ff5546" $ml={9} $ls={0.1}>UOS:+0.50</Reading>
            <Push>
              <svg width="28" height="28" viewBox="0 0 28 28" fontFamily={fontStack}>
                <circle cx="14" cy="14" r="12.500" stroke="#c0c0c0" strokeWidth="1.800" fill="none" />
                <text x="14" y="20.500" fontSize="18.500" textAnchor="middle" fill="#c0c0c0">?</text>
              </svg>
            </Push>
          </PanelRow>
        </PanelHead>
      </Panel>

      <Dock>
        <DockItems>
          <Sector>
            <svg width="19" height="11" viewBox="0 0 19 11"><path d="M0,11H19L9.500,0z" fill="#bcbcbc" /></svg>
            <div>传媒</div>
            <SectorChange>-2.00%</SectorChange>
          </Sector>
          <DockItem>
            <svg width="40" height="46" viewBox="0 0 40 46" fill="none" stroke="#ececec" strokeWidth="2.200">
              <path d="M5.500,3H34.500Q38,3 38,6.500V34.500L29,43.500H5.500Q2,43.500 2,40V6.500Q2,3 5.500,3z" />
              <path d="M7.500,13.500H33M7.500,19H33M7.500,24.500H33M7.500,30H26" />
            </svg>
            下单
          </DockItem>
          <DockItem>
            <svg width="46" height="46" viewBox="0 0 46 46" fill="none" stroke="#ececec" strokeWidth="2.200">
              <rect x="1.500" y="9.500" width="43" height="31.500" rx="4" />
              <path d="M14,5.500H32M15.500,25.500H30.500M23,18V33M8,42.800H15M31,42.800H38" />
            </svg>
            诊股
          </DockItem>
          <DockItem>
            <svg width="40" height="46" viewBox="0 0 40 46" fill="none" stroke="#ececec" strokeWidth="2.200">
              <rect x="1.500" y="5" width="36.500" height="36.500" />
              <path d="M9.500,23.200H30M19.700,13V33.500" />
            </svg>
            加自选
          </DockItem>
          <DockItem>
            <svg width="40" height="46" viewBox="0 0 40 46" fill="none" stroke="#a8a8a8" strokeWidth="2.800">
              <circle cx="20" cy="23.200" r="18.300" />
              <path d="M12,16.500H28M12,23.200H28M12,30H28" strokeLinecap="round" />
            </svg>
            功能
          </DockItem>
        </DockItems>
        <SystemNav>
          <svg width="29" height="30" viewBox="0 0 29 30"><path d="M1,3H28M1,15.500H28M1,28H28" stroke="#8e8e8e" strokeWidth="2" /></svg>
          <svg width="29" height="30" viewBox="0 0 29 30"><rect x="2" y="2.800" width="25" height="25.500" rx="5.500" fill="none" stroke="#8e8e8e" strokeWidth="1.700" /></svg>
          <svg width="29" height="30" viewBox="0 0 29 30"><path d="M25,3.500Q28,2 28,5V26Q28,29 25,27.500L5,17.500Q2,15.500 5,13.500z" fill="none" stroke="#7c7c7c" strokeWidth="1.600" /></svg>
        </SystemNav>
      </Dock>

      <Watermark>
        <BrandRing size={29} color="#d2d2d2" sw={2.7} />
        <WatermarkBrand>雪球：</WatermarkBrand>
        <span>一壶浊酒一杯清茶</span>
      </Watermark>
    </Screen>
  );
}
